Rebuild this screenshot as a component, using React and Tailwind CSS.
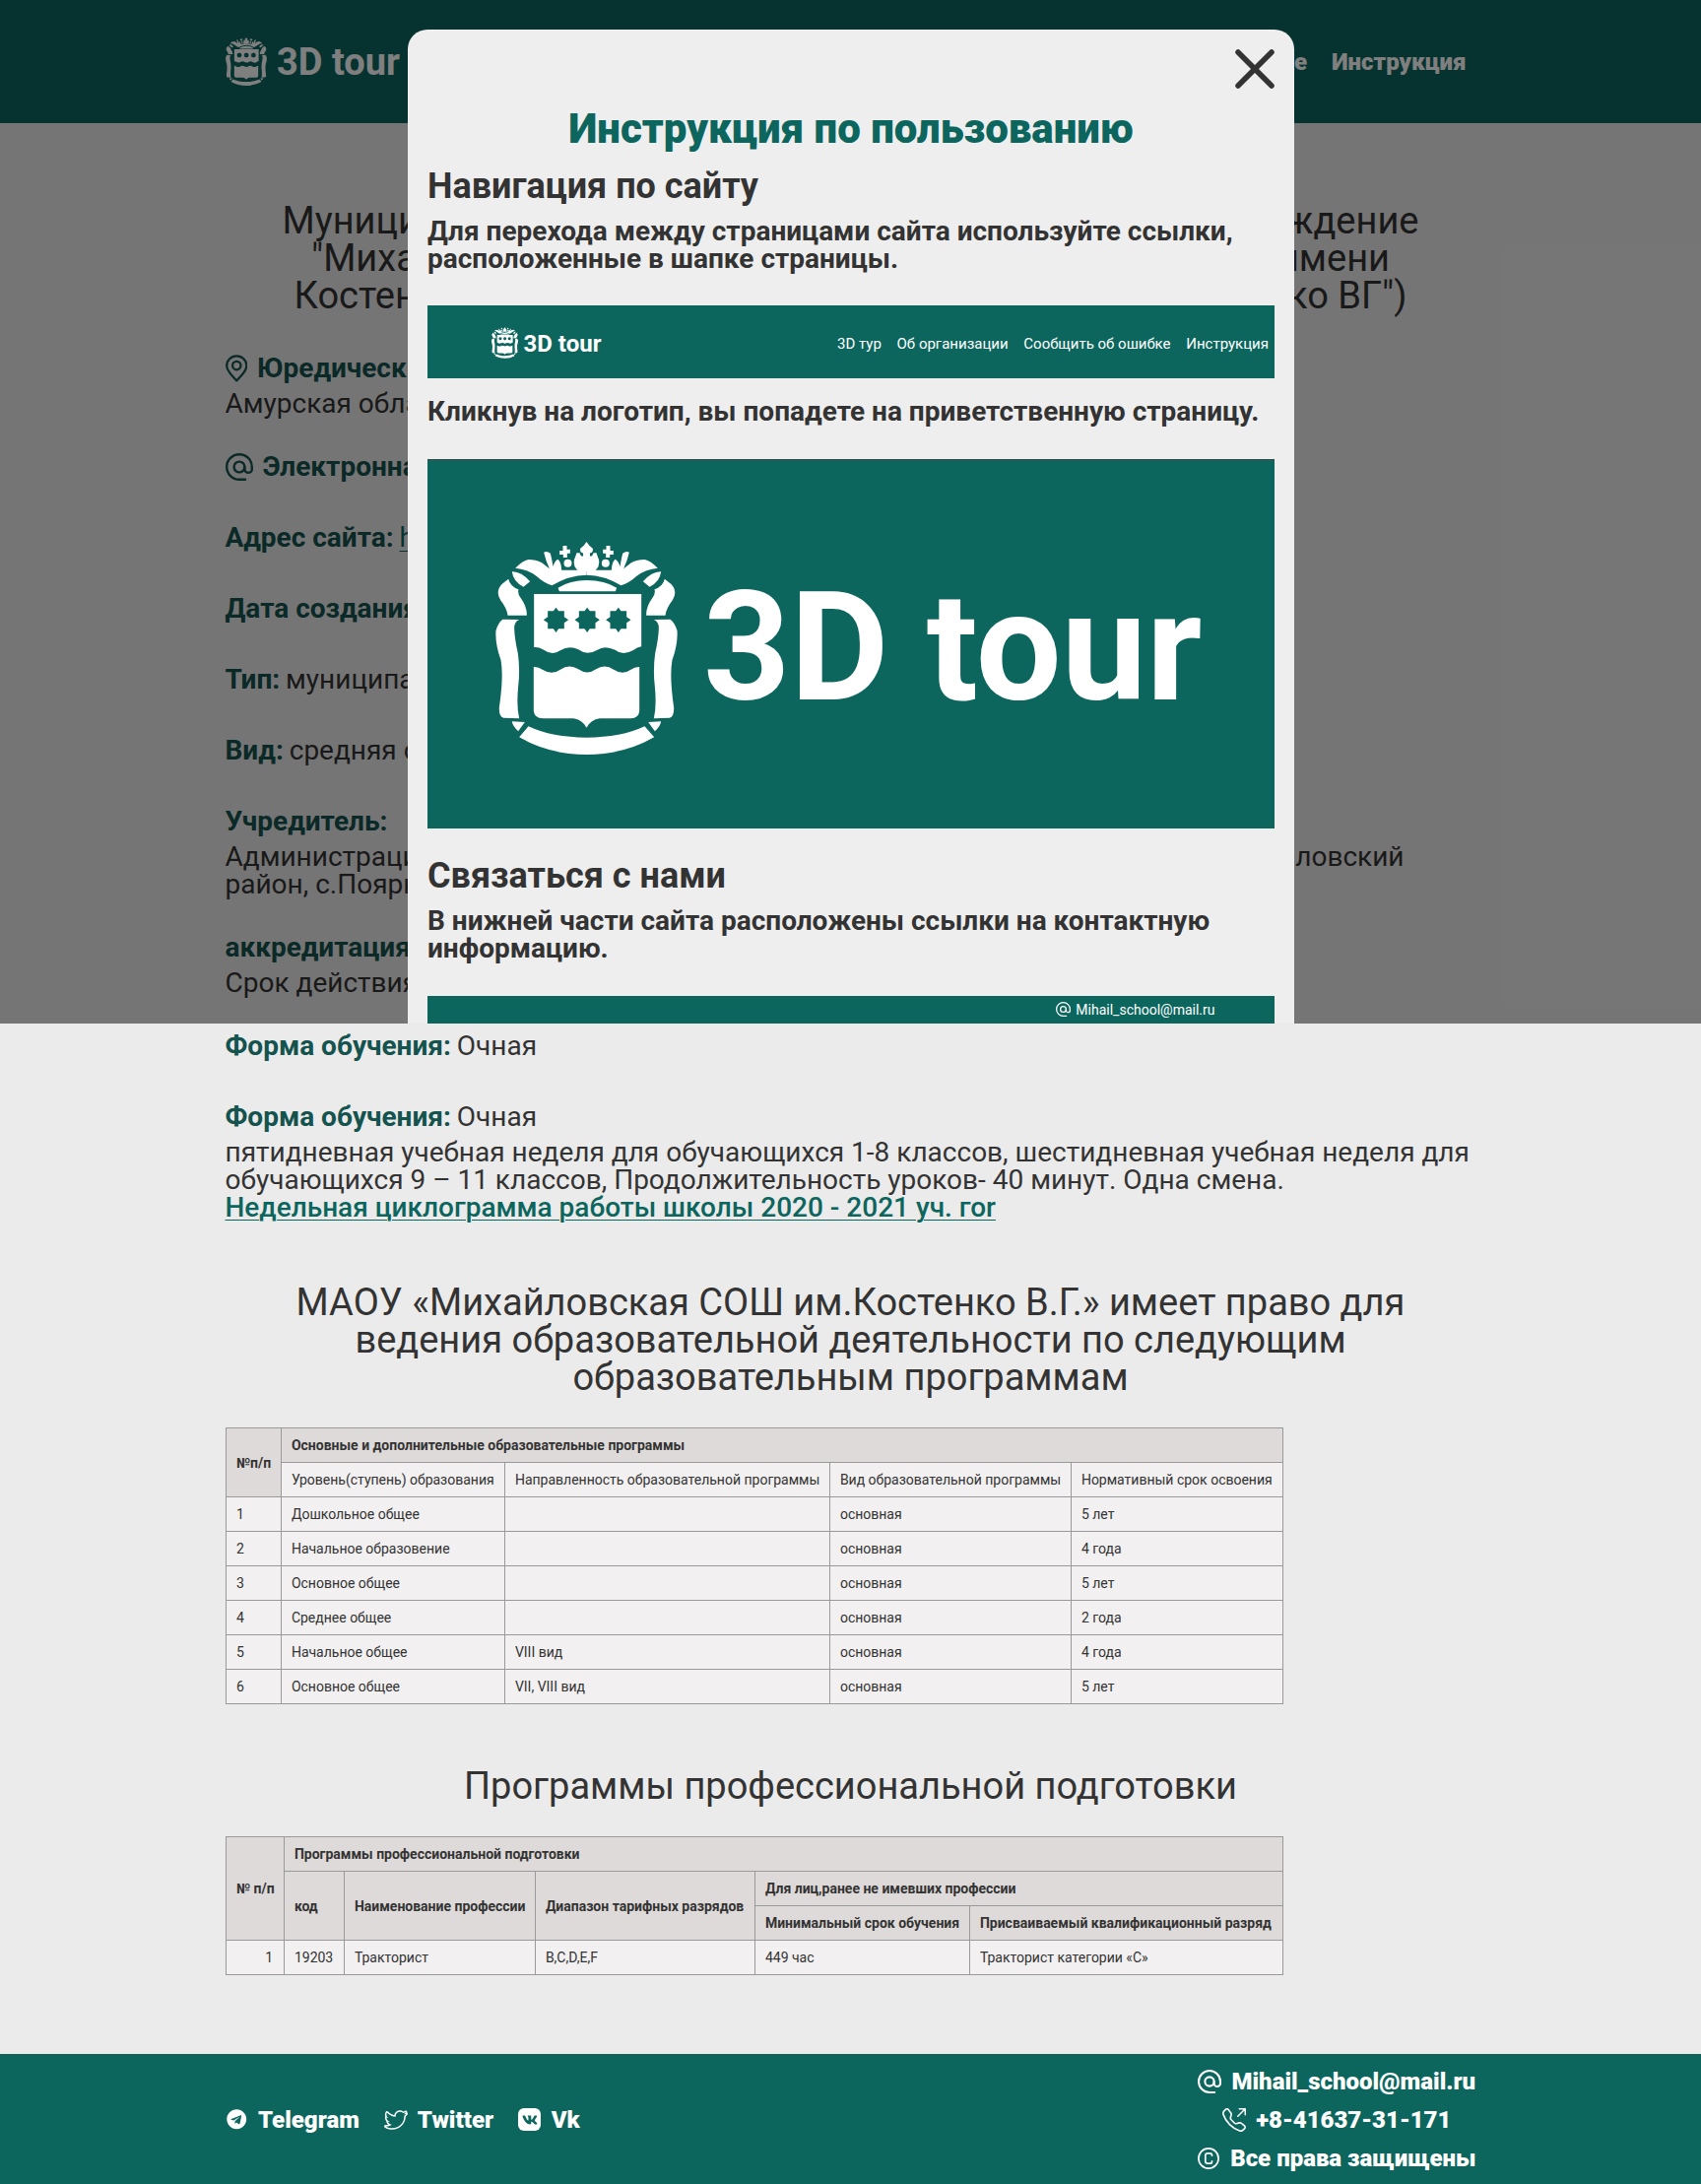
import React from "react";
import { BsTelephoneOutbound } from "react-icons/bs";
import { FaTelegram, FaVk } from "react-icons/fa";
import { SlSocialTwitter } from "react-icons/sl";

const STAR =
  "M0 -38 L8 -27 L25 -27 L25 -9 L38 0 L25 9 L25 27 L8 27 L0 38 L-8 27 L-25 27 L-25 9 L-38 0 L-25 -9 L-25 -27 L-8 -27 Z";

function RibbonSide() {
  return (
    <g>
      <path d="M128 140 Q150 118 168 114 Q190 114 209 124 L232 142 Q220 115 215 92 Q224 87 235 95 Q240 115 243 135 Q248 117 258 113 Q268 122 269 146 L345 146 L345 161 Q290 162 240 193 Q214 184 192 164 Q165 143 128 140 Z" />
      <path d="M118 151 Q146 150 173 181 L153 197 Q122 183 118 151 Z" />
      <path d="M107 173 Q112 195 138 205 Q134 218 145 232 Q164 258 163 284 L105 284 Q102 262 83 238 Q66 210 88 188 Z" />
      <path d="M90 296 L140 297 Q124 304 125 325 Q126 355 136 400 Q143 450 137 500 Q131 560 140 598 L92 596 Q78 592 79 565 Q93 470 84 420 Q66 370 69 330 Q76 306 90 296 Z" />
      <path d="M118 607 L157 609 L137 637 Q120 622 118 607 Z" />
    </g>
  );
}

function Emblem({ className }) {
  return (
    <svg className={className} viewBox="68 60 554 648" fill="#fff" aria-hidden="true">
      <RibbonSide />
      <g transform="translate(690 0) scale(-1 1)">
        <RibbonSide />
      </g>
      <path d="M345 60 L354 72 L364 80 Q366 92 356 94 L355 103 Q362 108 366 94 L375 94 L380 108 Q386 118 381 136 L370 150 L320 150 L309 136 Q304 118 310 108 L315 94 L324 94 Q328 108 335 103 L334 94 Q324 92 326 80 L336 72 Z" />
      <g>
        <path d="M273 72h12v11h10v12h-9v13h-12v-9h-11v-12h10z" />
        <circle cx="288" cy="125" r="16" fill="#0c665e" />
        <circle cx="288" cy="125" r="12" />
        <path d="M417 72h-12v11h-10v12h9v13h12v-9h11v-12h-10z" />
        <circle cx="403" cy="125" r="16" fill="#0c665e" />
        <circle cx="403" cy="125" r="12" />
      </g>
      <path d="M258 200 Q295 177 346 177 Q400 177 437 200 L433 211 L262 211 Z" />
      <path
        fillRule="evenodd"
        d="M185 219H512V379Q500 381 486 391Q455 408 432 389Q400 374 378 389Q347 408 320 388Q293 374 265 391Q240 408 212 388Q200 380 185 381Z"
      />
      <g fill="#0c665e">
        <path d={STAR} transform="translate(252 298)" />
        <path d={STAR} transform="translate(347 298)" />
        <path d={STAR} transform="translate(442 298)" />
      </g>
      <path d="M184 441Q198 440 212 450Q240 467 265 449Q293 430 320 448Q347 467 374 448Q400 430 428 449Q455 467 480 449Q493 440 506 441V575Q504 597 480 598H385Q358 602 345 626Q332 602 305 598H212Q186 597 184 575Z" />
      <path d="M168 622Q240 656 345 656Q450 656 522 622L551 655Q460 708 345 708Q230 708 140 655Z" />
    </svg>
  );
}

function AtIcon({ className }) {
  return (
    <svg className={className} viewBox="0 0 28 28" fill="none" stroke="currentColor" strokeWidth="2.4" strokeLinecap="round" aria-hidden="true">
      <path d="M20 26.8H14A12.8 12.8 0 1 1 26.8 14v2.2a3.7 3.7 0 0 1-7.4 0V14" />
      <circle cx="14" cy="14" r="5.4" />
    </svg>
  );
}

function PinIcon({ className }) {
  return (
    <svg className={className} viewBox="0 0 23 28" fill="none" stroke="currentColor" strokeWidth="2.3" strokeLinejoin="round" aria-hidden="true">
      <path d="M11.5 26.7C8 23 1.2 17 1.2 11.3a10.3 10.3 0 0 1 20.6 0C21.8 17 15 23 11.5 26.7Z" />
      <circle cx="11.5" cy="11" r="4.3" />
    </svg>
  );
}

function CopyIcon({ className }) {
  return (
    <svg className={className} viewBox="0 0 22 22" fill="none" stroke="currentColor" strokeWidth="1.7" strokeLinecap="round" aria-hidden="true">
      <circle cx="11" cy="11" r="10.1" />
      <path d="M14.5 8.2V7.8a2 2 0 0 0-2-2H10a2.2 2.2 0 0 0-2.2 2.2v6a2.2 2.2 0 0 0 2.2 2.2h2.5a2 2 0 0 0 2-2v-.4" />
    </svg>
  );
}

function Label({ children }) {
  return <span className="-mr-px font-bold text-[#14534e]">{children}</span>;
}

const programs = [
  ["1", "Дошкольное общее", "", "основная", "5 лет"],
  ["2", "Начальное образовение", "", "основная", "4 года"],
  ["3", "Основное общее", "", "основная", "5 лет"],
  ["4", "Среднее общее", "", "основная", "2 года"],
  ["5", "Начальное общее", "VIII вид", "основная", "4 года"],
  ["6", "Основное общее", "VII, VIII вид", "основная", "5 лет"],
];

const cell = "border border-[#999] px-[10.4px] py-[10px] whitespace-nowrap";
const head = "border border-[#999] px-[10.4px] py-[10px] whitespace-nowrap bg-[#dedad9] text-left font-bold";
const table = "w-[1073px] table-fixed border-collapse bg-[#f2f0f1] text-[14px] leading-[14px]";

function Header() {
  return (
    <header className="h-[125px] bg-[#0c665e] text-white">
      <div className="mx-auto flex h-full w-[1270px] items-center justify-between">
        <div className="flex items-center">
          <Emblem className="-mt-px h-[49px] w-[42px]" />
          <span className="ml-[10.5px] text-[38px] leading-none font-bold whitespace-nowrap">3D tour</span>
        </div>
        <nav className="flex gap-[25px] pr-[10px] text-[24px] leading-none font-black whitespace-nowrap">
          <span>3D тур</span>
          <span>Об организации</span>
          <span>Сообщить об ошибке</span>
          <span>Инструкция</span>
        </nav>
      </div>
    </header>
  );
}

function Info() {
  return (
    <div className="mt-[41px] flex flex-col gap-9">
      <div className="flex flex-col gap-2">
        <p className="flex gap-[10px] text-[#14534e]">
          <PinIcon className="h-[28px] w-[22.5px]" />
          <Label>Юредический адрес:</Label>
        </p>
        <p>Амурская область, Михайловский район</p>
      </div>
      <div className="flex flex-col gap-11 pb-2">
        <p className="flex gap-[10px] text-[#14534e]">
          <AtIcon className="size-[28px]" />
          <Label>Электронная почта:</Label>
        </p>
        <p>
          <Label>Адрес сайта:</Label> <span className="text-[#0c665e] underline decoration-1 underline-offset-4">http://shkola</span>
        </p>
        <p><Label>Дата создания:</Label> 1972</p>
        <p><Label>Тип:</Label> муниципальное</p>
        <p><Label>Вид:</Label> средняя общая школа</p>
      </div>
      <div className="flex flex-col gap-2">
        <p><Label>Учредитель:</Label></p>
        <div>
          <p className="w-[1197px] whitespace-nowrap [text-align-last:justify]">Администрация Михайловского района, Амурская область, Михайловский</p>
          <p>район, с.Поярково</p>
        </div>
      </div>
      <div className="flex flex-col gap-2">
        <p><Label>аккредитация:</Label></p>
        <p>Срок действия</p>
      </div>
      <p className="pb-2"><Label>Форма обучения:</Label> Очная</p>
      <div className="flex flex-col gap-2">
        <p><Label>Форма обучения:</Label> Очная</p>
        <div className="whitespace-nowrap">
          <p>пятидневная учебная неделя для обучающихся 1-8 классов, шестидневная учебная неделя для</p>
          <p>обучающихся 9 – 11 классов, Продолжительность уроков- 40 минут. Одна смена.</p>
          <p><a className="font-medium text-[#0c665e] underline decoration-1 underline-offset-[3px]">Недельная циклограмма работы школы 2020 - 2021 уч. гоr</a></p>
        </div>
      </div>
    </div>
  );
}

function ProgramsTable() {
  return (
    <table className={table}>
      <colgroup>
        <col className="w-[56px]" /><col className="w-[227px]" /><col className="w-[330px]" /><col className="w-[245px]" /><col className="w-[215px]" />
      </colgroup>
      <tbody>
        <tr>
          <th rowSpan={2} className={head}>№п/п</th>
          <th colSpan={4} className={head}>Основные и дополнительные образовательные программы</th>
        </tr>
        <tr>
          <td className={cell}>Уровень(ступень) образования</td>
          <td className={cell}>Направленность образовательной программы</td>
          <td className={cell}>Вид образовательной программы</td>
          <td className={cell}>Нормативный срок освоения</td>
        </tr>
        {programs.map((row) => (
          <tr key={row[0]} className="h-[35px]">
            {row.map((c, i) => <td key={i} className={cell}>{c}</td>)}
          </tr>
        ))}
      </tbody>
    </table>
  );
}

function TrainingTable() {
  return (
    <table className={table}>
      <colgroup>
        <col className="w-[59px]" /><col className="w-[61px]" /><col className="w-[194px]" /><col className="w-[223px]" /><col className="w-[218px]" /><col className="w-[318px]" />
      </colgroup>
      <tbody>
        <tr>
          <th rowSpan={3} className={head}>№ п/п</th>
          <th colSpan={5} className={head}>Программы профессиональной подготовки</th>
        </tr>
        <tr>
          <th rowSpan={2} className={head}>код</th>
          <th rowSpan={2} className={head}>Наименование профессии</th>
          <th rowSpan={2} className={head}>Диапазон тарифных разрядов</th>
          <th colSpan={2} className={head}>Для лиц,ранее не имевших профессии</th>
        </tr>
        <tr>
          <th className={head}>Минимальный срок обучения</th>
          <th className={head}>Присваиваемый квалификационный разряд</th>
        </tr>
        <tr>
          <td className={cell + " text-right"}>1</td>
          <td className={cell}>19203</td>
          <td className={cell}>Тракторист</td>
          <td className={cell}>B,C,D,E,F</td>
          <td className={cell}>449 час</td>
          <td className={cell}>Тракторист категории «С»</td>
        </tr>
      </tbody>
    </table>
  );
}

function Footer() {
  return (
    <footer className="h-[132px] bg-[#0c665e] pt-px text-[24px] leading-[24px] font-black text-white">
      <div className="mx-auto flex h-full w-[1270px] items-center justify-between">
        <div className="flex items-center">
          <FaTelegram className="ml-[1.5px] size-[20.5px]" />
          <span className="ml-[11.5px]">Telegram</span>
          <SlSocialTwitter className="ml-[25px] size-[24px]" />
          <span className="ml-[10px]">Twitter</span>
          <span className="ml-[25px] flex size-[23px] items-center justify-center rounded-[6px] bg-white text-[#0c665e]">
            <FaVk className="size-[16px]" />
          </span>
          <span className="ml-[10.5px]">Vk</span>
        </div>
        <div className="flex flex-col items-center gap-[15px]">
          <p className="flex gap-[10px]"><AtIcon className="size-[24px]" />Mihail_school@mail.ru</p>
          <p className="flex gap-[10px]"><BsTelephoneOutbound className="size-[24px]" />+8-41637-31-171</p>
          <p className="flex items-center gap-[11px]"><CopyIcon className="size-[22px]" />Все права защищены</p>
        </div>
      </div>
    </footer>
  );
}

function Modal() {
  return (
    <div className="relative ml-[414px] h-[1009px] w-[900px] overflow-hidden rounded-t-[20px] bg-[#eee] px-5 pt-[80px] text-[28px] leading-[28px] font-bold text-[#333]">
      <svg className="absolute top-5 right-5 size-10" viewBox="0 0 40 40" stroke="#333" strokeWidth="5.5" strokeLinecap="round" aria-hidden="true">
        <path d="M3 3L37 37M37 3L3 37" />
      </svg>
      <h2 className="text-center text-[42px] leading-[42px] font-black text-[#0c665e]">Инструкция по пользованию</h2>
      <h3 className="mt-[19px] text-[36px] leading-[36px]">Навигация по сайту</h3>
      <p className="mt-[14px]">Для перехода между страницами сайта используйте ссылки, расположенные в шапке страницы.</p>
      <div className="mt-[33px] flex h-[74px] items-center bg-[#0c665e] pt-[4px] pr-[6px] pl-[65px] font-normal text-white">
        <Emblem className="-mt-[3px] h-[32px] w-[27px]" />
        <span className="ml-[5.5px] text-[24px] leading-none font-bold">3D tour</span>
        <nav className="ml-auto flex gap-[15.7px] text-[15px] leading-none whitespace-nowrap">
          <span>3D тур</span>
          <span>Об организации</span>
          <span>Сообщить об ошибке</span>
          <span>Инструкция</span>
        </nav>
      </div>
      <p className="mt-[20px] whitespace-nowrap">Кликнув на логотип, вы попадете на приветственную страницу.</p>
      <div className="mt-[34px] flex h-[375px] items-center border-t border-[#444] bg-[#0c665e] pl-[69px] text-white">
        <Emblem className="mt-[8px] h-[216px] w-[185px]" />
        <span className="mt-[8px] ml-[26px] text-[154px] leading-none whitespace-nowrap">3D tour</span>
      </div>
      <h3 className="mt-[30px] text-[36px] leading-[36px]">Связаться с нами</h3>
      <p className="mt-[14px]">В нижней части сайта расположены ссылки на контактную информацию.</p>
      <div className="mt-[34px] flex h-[74px] justify-end bg-[#0c665e] pt-[6px] pr-[60.5px] text-[14px] leading-[16px] font-normal text-white">
        <AtIcon className="size-[15px]" />
        <span className="ml-[5px]">Mihail_school@mail.ru</span>
      </div>
    </div>
  );
}

export default function App() {
  return (
    <div className="relative min-h-[2217px] w-[1727px] bg-[#ebebeb] font-[Roboto,sans-serif] text-[28px] leading-[28px] text-[#333]">
      <Header />
      <main className="mx-auto h-[1960px] w-[1270px] pt-[80px]">
        <h1 className="flex flex-col items-center text-[38px] leading-[38px] whitespace-nowrap">
          <span className="w-[1154px] [text-align-last:justify]">Муниципальное автономное образовательное учреждение</span>
          <span className="w-[1095px] [text-align-last:justify]">"Михайловская средняя образовательная школа имени</span>
          <span className="flex w-[1130px] justify-between">
            <span>Костенко В.Г." (МАОУ</span>
            <span>"Михайловская СОШ Костенко ВГ")</span>
          </span>
        </h1>
        <Info />
        <h2 className="mx-auto mt-[63px] mb-[32px] w-[1200px] text-center text-[38px] leading-[38px]">
          МАОУ «Михайловская СОШ им.Костенко В.Г.» имеет право для<br />ведения образовательной деятельности по следующим<br />образовательным программам
        </h2>
        <ProgramsTable />
        <h2 className="mt-[64px] mb-[32px] text-center text-[38px] leading-[38px]">Программы профессиональной подготовки</h2>
        <TrainingTable />
      </main>
      <Footer />
      <div className="absolute inset-x-0 top-0 h-[1039px] overflow-hidden bg-black/50 pt-[30px]">
        <Modal />
      </div>
    </div>
  );
}
